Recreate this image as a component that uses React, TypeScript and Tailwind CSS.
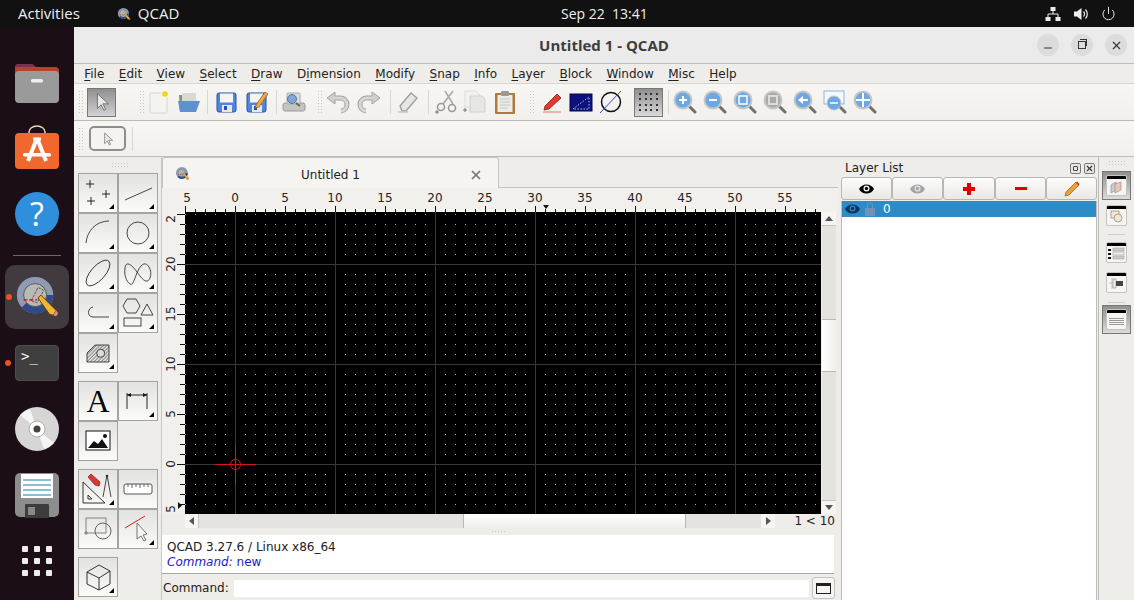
import React from 'react';
import { Power, Minus, X } from 'lucide-react';

const UI = { fontFamily: '"DejaVu Sans", sans-serif' };
const SHELL = { fontFamily: '"Open Sans", "Noto Sans", sans-serif' };

const Svg = ({ children, size = 24, box = 24 }: { children: React.ReactNode; size?: number; box?: number }) => (
  <svg width={size} height={size} viewBox={`0 0 ${box} ${box}`} className="block shrink-0">
    {children}
  </svg>
);

const QcadLogo = ({ size = 16 }: { size?: number }) => (
  <svg width={size} height={size} viewBox="0 0 48 48" className="block shrink-0">
    <circle cx="22" cy="22" r="19" fill="#8f9bb3" />
    <path d="M41 22a19 19 0 0 1-33 13l6-6a11 11 0 0 0 19-7z" fill="#2f4a86" />
    <circle cx="22" cy="22" r="12" fill="#b9b9b6" stroke="#555" strokeWidth="1" />
    <path d="M18 28l7-14 6 3-7 13z" fill="none" stroke="#555" strokeWidth="1" strokeDasharray="3 1" />
    <path d="M10 27h14" stroke="#d00" strokeWidth="1.5" strokeDasharray="4 2" />
    <path d="M25 25l3-3 16 16-3 5-4-1z" fill="#f2b632" stroke="#5b3a10" strokeWidth="1" />
    <path d="M41 43l3-5 2 3-2 3z" fill="#e58a8a" />
  </svg>
);

const DockIcons = () => (
  <div className="w-[74px] shrink-0 bg-[#1b0e17] flex flex-col items-center">
    <svg width="46" height="42" viewBox="0 0 46 42" className="block mt-[35px]">
      <path d="M1 6a4 4 0 0 1 4-4h13l4 3h19a4 4 0 0 1 4 4v10H1z" fill="#b5432f" />
      <path d="M1 6a4 4 0 0 1 4-4h13l4 3H1z" fill="#7c3050" />
      <rect x="1" y="9" width="44" height="32" rx="4" fill="#9a9a9a" />
      <rect x="17" y="17" width="12" height="3.5" rx="1.5" fill="#eee" />
    </svg>
    <svg width="46" height="44" viewBox="0 0 46 44" className="block mt-[21px]">
      <path d="M15 11V7a8 6 0 0 1 16 0v4" fill="none" stroke="#f0d9a8" strokeWidth="1.5" />
      <rect x="1" y="8" width="44" height="36" rx="4" fill="#f0682d" />
      <path d="M23 13l-9 23M23 13l9 23" stroke="#fff" strokeWidth="4" fill="none" />
      <path d="M19 14h8" stroke="#fff" strokeWidth="3" />
      <rect x="9" y="28" width="28" height="3.5" rx="1.5" fill="#fff" />
    </svg>
    <div className="mt-[23px] w-[44px] h-[44px] rounded-full bg-[#2f8fdc] flex items-center justify-center text-white text-[32px] leading-none" style={SHELL}>
      ?
    </div>
    <div className="mt-[19px] w-[48px] h-px bg-[#6f666c]" />
    <div className="relative mt-[9px] w-[64px] h-[64px] rounded-[10px] bg-[#413b3f] flex items-center justify-center">
      <span className="absolute left-[1px] top-[29px] w-[6px] h-[6px] rounded-full bg-[#e95420]" />
      <QcadLogo size={46} />
    </div>
    <div className="relative mt-[16px] w-[74px] flex justify-center">
      <span className="absolute left-[5px] top-[15px] w-[6px] h-[6px] rounded-full bg-[#e95420]" />
      <div className="w-[44px] h-[36px] rounded-[4px] bg-[#3f3f3f] border border-[#4c4c4c] text-white text-[14px] leading-none pl-[5px] pt-[3px]" style={{ fontFamily: '"DejaVu Sans Mono", monospace' }}>
        &gt;_
      </div>
    </div>
    <svg width="46" height="46" viewBox="0 0 46 46" className="block mt-[25px]">
      <circle cx="23" cy="23" r="22" fill="#d6d6d6" />
      <path d="M23 23L6 9a22 22 0 0 1 10-6zM23 23l17 14a22 22 0 0 1-10 6z" fill="#f5f5f5" />
      <circle cx="23" cy="23" r="8" fill="#fff" stroke="#b8a89a" />
      <circle cx="23" cy="23" r="3.5" fill="#444" />
    </svg>
    <svg width="46" height="46" viewBox="0 0 46 46" className="block mt-[20px]">
      <rect x="1" y="1" width="44" height="44" rx="5" fill="#8d8d8d" />
      <rect x="7" y="2" width="32" height="24" fill="#fff" />
      <path d="M9 8h28M9 13h28M9 18h28M9 23h28" stroke="#1b7fb0" strokeWidth="1.2" />
      <rect x="11" y="32" width="24" height="14" rx="1" fill="#3c3c3c" />
      <rect x="14" y="35" width="7" height="8" fill="#888" />
    </svg>
    <div className="mt-[28px] grid grid-cols-3 gap-x-[6px] gap-y-[6px]">
      {Array.from({ length: 9 }).map((_, i) => (
        <span key={i} className="w-[6px] h-[6px] rounded-[1px] bg-[#eeeeee]" />
      ))}
    </div>
  </div>
);

const Grip = ({ className = '' }: { className?: string }) => (
  <svg width="5" height="24" viewBox="0 0 5 24" className={`block shrink-0 ${className}`}>
    {[1, 4, 7, 10, 13, 16, 19, 22].map((y) => (
      <g key={y} fill="#c9c7c2">
        <rect x="0" y={y} width="1" height="1" />
        <rect x="3" y={y} width="1" height="1" />
      </g>
    ))}
  </svg>
);

const Sep = ({ className = '' }: { className?: string }) => <div className={`w-px h-[24px] bg-[#d8d6d1] shrink-0 ${className}`} />;

const Arrow = () => (
  <path d="M7 3v16l4-4 3 6 2-1-3-6h6z" fill="#e8e8e8" stroke="#6a6a6a" strokeWidth="1" />
);

const Disk = ({ pen = false }: { pen?: boolean }) => (
  <Svg>
    <rect x="2" y="3" width="19" height="19" rx="2" fill="#4e86e0" stroke="#2a4fa8" />
    <rect x="5" y="3.5" width="13" height="9" fill="#f4f4f4" />
    <rect x="7" y="15" width="10" height="7" fill="#e7e7e7" />
    <rect x="9" y="16" width="3" height="4" fill="#2a4fa8" />
    {pen && <path d="M11 15l9-13 3 2-9 13-4 1z" fill="#f0a93a" stroke="#8a5a1a" strokeWidth="0.7" />}
  </Svg>
);

const Zoom = ({ children, off = false }: { children?: React.ReactNode; off?: boolean }) => (
  <Svg>
    <path d="M15 15l7 7" stroke="#707070" strokeWidth="3" strokeLinecap="round" />
    <circle cx="10" cy="10" r="9.500" fill="#c6c6c4" />
    <circle cx="10" cy="10" r="7.500" fill={off ? '#a9a9a7' : '#6ea8e4'} />
    {children}
  </Svg>
);

const Turn = ({ flip = false }: { flip?: boolean }) => (
  <svg width="24" height="24" viewBox="0 0 24 24" className={`block shrink-0 ${flip ? '-scale-x-100' : ''}`}>
    <path d="M6 8h8a6.500 6.500 0 0 1 1 13" fill="none" stroke="#a2a2a0" strokeWidth="5" />
    <path d="M1 8l8-6v12z" fill="#cfcfcc" stroke="#a2a2a0" />
    <path d="M8 8h6a6.500 6.500 0 0 1 1 13" fill="none" stroke="#d6d6d3" strokeWidth="3" />
  </svg>
);

const TopToolbar = () => (
  <div className="h-[37px] shrink-0 flex items-center bg-gradient-to-b from-[#f8f6f3] to-[#f2f0ec] border-b border-[#bdbbb6] pl-[5px]">
    <Grip />
    <button className="ml-[3px] w-[29px] h-[29px] border border-[#777] bg-gradient-to-b from-[#8f8f8f] to-[#d2d2d2] flex items-center justify-center">
      <Svg size={22}><Arrow /></Svg>
    </button>
    <Grip className="ml-[24px]" />
    <div className="ml-[2px]">
      <Svg>
        <rect x="3" y="3" width="17" height="20" rx="1" fill="#f3f3f0" stroke="#d6d6d2" />
        <circle cx="18" cy="4" r="3.5" fill="#f4d21f" stroke="#fff" />
      </Svg>
    </div>
    <div className="ml-[6px]">
      <Svg>
        <path d="M2 5h7l2 2h8v14H3z" fill="#8a8a8a" />
        <path d="M5 3h14v8H5z" fill="#d8d8d8" />
        <path d="M1 11h22l-4 11H3z" fill="#5f90d0" />
      </Svg>
    </div>
    <Sep className="ml-[6px]" />
    <div className="ml-[7px]"><Disk /></div>
    <div className="ml-[6px]"><Disk pen /></div>
    <Sep className="ml-[7px]" />
    <div className="ml-[5px]">
      <Svg>
        <rect x="1" y="13" width="22" height="8" rx="2" fill="#c4c4c2" stroke="#999" />
        <rect x="5" y="3" width="13" height="11" rx="1" fill="#dcdcda" stroke="#aaa" />
        <circle cx="10" cy="9" r="4.5" fill="#7fa7d8" stroke="#5577aa" />
        <path d="M14 13l4 3" stroke="#666" strokeWidth="2" />
      </Svg>
    </div>
    <Grip className="ml-[12px]" />
    <div className="ml-[3px]"><Turn /></div>
    <div className="ml-[7px]"><Turn flip /></div>
    <Sep className="ml-[9px]" />
    <div className="ml-[5px]">
      <Svg>
        <path d="M4 16L15 3l6 5-11 13H6z" fill="#e6e6e3" stroke="#9d9d9a" strokeWidth="1.3" />
        <path d="M2 22h10" stroke="#c8c8c5" strokeWidth="1.5" />
      </Svg>
    </div>
    <Sep className="ml-[8px]" />
    <div className="ml-[5px]">
      <Svg>
        <path d="M19 1L9 14M11 1l8 13" stroke="#aaa" strokeWidth="1.6" fill="none" />
        <circle cx="7" cy="17" r="3.5" fill="none" stroke="#999" strokeWidth="1.6" />
        <circle cx="18" cy="18" r="3.5" fill="none" stroke="#999" strokeWidth="1.6" />
        <path d="M1 22h4M3 20v4" stroke="#777" />
      </Svg>
    </div>
    <div className="ml-[4px]">
      <Svg>
        <path d="M3 1h11l3 3v13H3z" fill="#f2f2f0" stroke="#dcdcd9" />
        <path d="M8 6h12l3 3v13H8z" fill="#e6e6e3" stroke="#d0d0cd" />
        <path d="M1 20h4M3 18v4" stroke="#777" />
      </Svg>
    </div>
    <div className="ml-[7px]">
      <Svg>
        <rect x="2" y="3" width="20" height="21" rx="1" fill="#b07a3c" />
        <rect x="4.5" y="5" width="15" height="17" fill="#ecebe8" />
        <path d="M7 9h10M7 12h10M7 15h10M7 18h7" stroke="#c5c5c2" />
        <rect x="8" y="1" width="8" height="5" rx="1" fill="#999" />
      </Svg>
    </div>
    <Grip className="ml-[13px]" />
    <div className="ml-[6px]">
      <Svg>
        <path d="M4 16L16 4l4 4L8 19l-5 1z" fill="#e03a30" stroke="#8a1a16" strokeWidth="0.8" />
        <path d="M2 22h18" stroke="#e98a80" strokeWidth="1.2" />
      </Svg>
    </div>
    <div className="ml-[4px]">
      <Svg>
        <rect x="1" y="4" width="22" height="17" fill="#0b1280" stroke="#05093f" />
        <path d="M4 19L20 7v12z" fill="none" stroke="#dfe3ff" strokeWidth="0.8" strokeDasharray="1.5 1.5" />
      </Svg>
    </div>
    <div className="ml-[6px]">
      <Svg>
        <circle cx="12" cy="12" r="9.5" fill="none" stroke="#111" strokeWidth="1.5" />
        <path d="M1 23L22 1" stroke="#3344dd" strokeWidth="1" />
      </Svg>
    </div>
    <button className="ml-[11px] w-[29px] h-[29px] border border-[#777] bg-gradient-to-b from-[#8f8f8f] to-[#dadada] grid grid-cols-4 gap-[3px] p-[4px] place-items-center">
      {Array.from({ length: 16 }).map((_, i) => (
        <span key={i} className="w-[2px] h-[2px] bg-[#333]" />
      ))}
    </button>
    <Sep className="ml-[5px]" />
    <div className="ml-[4px]"><Zoom><path d="M6 10h8M10 6v8" stroke="#fff" strokeWidth="2" /></Zoom></div>
    <div className="ml-[6px]"><Zoom><path d="M6 10h8" stroke="#fff" strokeWidth="2" /></Zoom></div>
    <div className="ml-[6px]"><Zoom><rect x="6" y="6" width="8" height="8" fill="none" stroke="#fff" strokeWidth="1.5" /></Zoom></div>
    <div className="ml-[6px]"><Zoom off><rect x="6" y="6" width="8" height="8" fill="none" stroke="#ddd" strokeWidth="2" /></Zoom></div>
    <div className="ml-[6px]"><Zoom><path d="M5 10l5-4v3h5v2h-5v3z" fill="#fff" /></Zoom></div>
    <div className="ml-[6px]">
      <Svg>
        <rect x="1" y="1" width="20" height="13" fill="#f4f8fd" stroke="#8fb4de" />
        <path d="M16 16l6 6" stroke="#707070" strokeWidth="3" strokeLinecap="round" />
        <circle cx="11" cy="13" r="7" fill="#6ea8e4" stroke="#c6c6c4" />
        <path d="M7 13h8" stroke="#d8e8f8" strokeWidth="2" />
      </Svg>
    </div>
    <div className="ml-[6px]">
      <Zoom><path d="M10 3v14M3 10h14" stroke="#fff" strokeWidth="2" /></Zoom>
    </div>
  </div>
);

const Tool = ({ children, corner = true }: { children?: React.ReactNode; corner?: boolean }) => (
  <div className="relative w-[40px] h-[40px] bg-gradient-to-b from-[#e2e2e1] to-[#fbfbfa] flex items-center justify-center border border-[#a3a3a1]">
    {children}
    {corner && (
      <span className="absolute right-[3px] bottom-[3px] w-0 h-0 border-l-[5px] border-l-transparent border-b-[5px] border-b-black" />
    )}
  </div>
);

const ToolColumn = () => (
  <div className="w-[88px] shrink-0 bg-[#efedea] border-r border-[#c9c7c3] pl-[4px] overflow-hidden">
    <div className="h-[16px] flex items-center justify-center">
      <svg width="16" height="4"><g fill="#c9c7c2">{[0, 3, 6, 9, 12, 15].map((x) => <React.Fragment key={x}><rect x={x} y="0" width="1" height="1" /><rect x={x} y="3" width="1" height="1" /></React.Fragment>)}</g></svg>
    </div>
    <div className="grid grid-cols-[40px_40px]">
      <Tool>
        <Svg size={32} box={32}><path d="M8 3v8M4 7h8M24 13v8M20 17h8M9 20v8M5 24h8" stroke="#111" strokeWidth="0.9" /></Svg>
      </Tool>
      <Tool><Svg size={32} box={32}><path d="M3 23L30 11" stroke="#333" strokeWidth="0.9" /></Svg></Tool>
      <Tool><Svg size={32} box={32}><path d="M4 26C5 14 14 4 27 4" fill="none" stroke="#333" strokeWidth="0.9" /></Svg></Tool>
      <Tool><Svg size={32} box={32}><circle cx="16" cy="16" r="11" fill="none" stroke="#333" strokeWidth="0.9" /></Svg></Tool>
      <Tool><Svg size={32} box={32}><ellipse cx="16" cy="16" rx="7" ry="16" transform="rotate(42 16 16)" fill="none" stroke="#333" strokeWidth="0.9" /></Svg></Tool>
      <Tool><Svg size={32} box={32}><path d="M3 11C4 3 10 8 15 15S25 28 28 21 25 2 19 9 12 30 8 27 2 18 3 11z" fill="none" stroke="#333" strokeWidth="0.9" /></Svg></Tool>
      <Tool><Svg size={32} box={32}><path d="M27 20H11C5 20 5 11 11 10" fill="none" stroke="#333" strokeWidth="0.9" /></Svg></Tool>
      <Tool>
        <Svg size={36} box={36}>
          <path d="M3 11l4-7h9l4 7-4 7H7z" fill="none" stroke="#333" strokeWidth="0.9" />
          <path d="M27 9l6 11H21z" fill="none" stroke="#333" strokeWidth="0.9" />
          <rect x="4" y="23" width="17" height="8" fill="none" stroke="#333" strokeWidth="0.9" />
        </Svg>
      </Tool>
      <Tool>
        <Svg size={32} box={32}>
          <defs>
            <pattern id="hatch" width="2.500" height="2.500" patternUnits="userSpaceOnUse" patternTransform="rotate(-45)">
              <path d="M0 1h3" stroke="#555" strokeWidth="0.8" />
            </pattern>
          </defs>
          <path d="M5 25V16L13 8H27V25z" fill="url(#hatch)" stroke="#333" strokeWidth="0.9" />
          <circle cx="18.700" cy="16.300" r="4" fill="#ddd" stroke="#333" strokeWidth="0.9" />
        </Svg>
      </Tool>
    </div>
    <div className="grid grid-cols-[40px_40px] mt-[8px]">
      <Tool corner={false}>
        <span className="text-[32px] leading-none text-black" style={{ fontFamily: '"Liberation Serif", serif' }}>A</span>
      </Tool>
      <Tool>
        <Svg size={32} box={32}>
          <path d="M5 8v16M25 8v16M5 10h20" stroke="#111" fill="none" strokeWidth="0.9" />
          <path d="M5 10l4-2v4zM25 10l-4-2v4z" fill="#111" />
        </Svg>
      </Tool>
      <Tool corner={false}>
        <Svg size={28} box={28}>
          <rect x="2" y="4" width="24" height="19" fill="#fff" stroke="#111" />
          <path d="M4 21l6-7 4 3 4-5 6 9z" fill="#111" />
          <circle cx="21" cy="9" r="2" fill="#111" />
        </Svg>
      </Tool>
    </div>
    <div className="grid grid-cols-[40px_40px] mt-[8px]">
      <Tool>
        <Svg size={36} box={36}>
          <path d="M3 11v21h22zM8 24v4h4z" fill="none" stroke="#333" strokeWidth="1" />
          <path d="M8 6l3-3 9 8-1 4-4-1z" fill="#d9392f" stroke="#7a1a16" strokeWidth="0.7" />
          <path d="M27 4l-4 22M27 4l4 22" stroke="#333" fill="none" strokeWidth="0.9" />
          <circle cx="27" cy="5" r="1.300" fill="#333" />
        </Svg>
      </Tool>
      <Tool corner={false}>
        <Svg size={30} box={30}>
          <rect x="1" y="10" width="28" height="10" rx="2" fill="#fff" stroke="#444" strokeWidth="0.9" />
          <path d="M5 10v3M9 10v4M13 10v3M17 10v4M21 10v3M25 10v3" stroke="#444" strokeWidth="0.8" />
        </Svg>
      </Tool>
      <Tool corner={false}>
        <Svg size={32} box={32}>
          <rect x="4" y="5" width="20" height="15" fill="none" stroke="#777" strokeWidth="0.9" />
          <circle cx="21" cy="18" r="8" fill="none" stroke="#555" strokeWidth="0.9" />
          <path d="M2 20h4M4 18v4" stroke="#777" strokeWidth="0.9" />
        </Svg>
      </Tool>
      <Tool>
        <Svg size={32} box={32}>
          <path d="M3 15L23 3" stroke="#e01a1a" strokeWidth="1" />
          <path d="M15 10v16l4-3 3 5 2-1-3-5 4-1z" fill="#f4f4f4" stroke="#666" strokeWidth="0.9" />
        </Svg>
      </Tool>
    </div>
    <div className="grid grid-cols-[40px_40px] mt-[8px]">
      <Tool>
        <Svg size={32} box={32}>
          <path d="M5 11L17 4l11 6v13l-11 6-12-6zM5 11l12 6 11-7M17 17v12" fill="none" stroke="#333" strokeWidth="1" />
        </Svg>
      </Tool>
    </div>
  </div>
);

const TOP_LABELS = [5, 0, 5, 10, 15, 20, 25, 30, 35, 40, 45, 50, 55];
const SIDE_LABELS = [0, 5, 10, 15, 20];

// rulers are drawn from the page x/y of the drawing area
const RulerTop = () => (
  <svg width="673" height="24" viewBox="162 188 673 24" className="block">
    {Array.from({ length: 64 }).map((_, i) => {
      const x = 185.5 + i * 10;
      const major = i % 5 === 0;
      return <path key={i} d={`M${x} ${major ? 206 : 209}V212`} stroke="#111" />;
    })}
    {TOP_LABELS.map((n, i) => (
      <text key={i} x={i === 0 ? 187 : 185 + i * 50} y="202" textAnchor="middle" fontSize="12" fill="#222" style={UI}>{n}</text>
    ))}
    <path d="M543 205h6l-3 4z" fill="#111" />
  </svg>
);

const RulerLeft = () => (
  <svg width="23" height="302" viewBox="162 212 23 302" className="block">
    {Array.from({ length: 31 }).map((_, i) => {
      const y = 214.5 + i * 10;
      const major = i % 5 === 0;
      return <path key={i} d={`M${major ? 177 : 180} ${y}H185`} stroke="#111" />;
    })}
    {SIDE_LABELS.map((n, i) => {
      const y = 464 - i * 50;
      return (
        <text key={i} x="173" y="0" textAnchor="middle" fontSize="12" fill="#222" style={UI} transform={`translate(2 ${y}) rotate(-90 173 0)`}>{n}</text>
      );
    })}
    <text x="173" y="0" textAnchor="middle" fontSize="12" fill="#222" style={UI} transform="translate(2 219) rotate(-90 173 0)">2</text>
    <text x="173" y="0" textAnchor="middle" fontSize="12" fill="#222" style={UI} transform="translate(2 509) rotate(-90 173 0)">5</text>
    <path d="M178 502v7l4-3.500z" fill="#111" />
  </svg>
);

const Drawing = () => (
  <svg width="636" height="302" viewBox="185 212 636 302" className="block">
    <defs>
      <pattern id="dots" x="185" y="214" width="10" height="10" patternUnits="userSpaceOnUse">
        <rect x="0" y="0" width="1" height="1" fill="#a8a8a8" />
      </pattern>
    </defs>
    <rect x="185" y="212" width="636" height="302" fill="#000" />
    <rect x="185" y="212" width="636" height="302" fill="url(#dots)" />
    {[235.5, 335.5, 435.5, 535.5, 635.5, 735.5].map((x) => (
      <path key={x} d={`M${x} 212V514`} stroke="#383838" />
    ))}
    {[264.5, 364.5, 464.5].map((y) => (
      <path key={y} d={`M185 ${y}H821`} stroke="#383838" />
    ))}
    <path d="M215 464.500H256M235.500 444V485" stroke="#d01818" />
    <circle cx="235.500" cy="464.500" r="5" fill="none" stroke="#d01818" />
  </svg>
);

const ScrollV = () => (
  <div className="w-[14px] h-[302px] flex flex-col bg-[#e4e3e0]">
    <div className="h-[14px] bg-[#f6f5f3] border-b border-[#c4c3bf] flex items-center justify-center">
      <span className="w-0 h-0 border-x-[4px] border-x-transparent border-b-[5px] border-b-[#555]" />
    </div>
    <div className="h-[93px]" />
    <div className="h-[53px] bg-gradient-to-r from-white to-[#f0efec] border-y border-[#b9b8b4]" />
    <div className="flex-1" />
    <div className="h-[14px] bg-[#f6f5f3] border-t border-[#c4c3bf] flex items-center justify-center">
      <span className="w-0 h-0 border-x-[4px] border-x-transparent border-t-[5px] border-t-[#555]" />
    </div>
  </div>
);

const ScrollH = () => (
  <div className="h-[14px] w-[590px] flex bg-[#e4e3e0]">
    <div className="w-[14px] bg-[#f6f5f3] border-r border-[#c4c3bf] flex items-center justify-center">
      <span className="w-0 h-0 border-y-[4px] border-y-transparent border-r-[5px] border-r-[#555]" />
    </div>
    <div className="w-[264px]" />
    <div className="w-[223px] bg-gradient-to-b from-white to-[#f0efec] border-x border-[#b9b8b4]" />
    <div className="flex-1" />
    <div className="w-[14px] bg-[#f6f5f3] flex items-center justify-center">
      <span className="w-0 h-0 border-y-[4px] border-y-transparent border-l-[5px] border-l-[#555]" />
    </div>
  </div>
);

const Center = () => (
  <div className="w-[676px] shrink-0 flex flex-col bg-[#efedea]">
    <div className="h-[31px] flex items-end">
      <div className="w-[337px] h-[31px] bg-[#f6f4f1] border border-b-0 border-[#c4c3bf] rounded-t-[3px] flex items-center relative text-[12px] text-[#222]" style={UI}>
        <span className="ml-[12px]"><QcadLogo size={15} /></span>
        <span className="ml-[111px] mt-[3px]">Untitled 1</span>
        <X className="absolute right-[15px] top-[10px] text-[#777]" size={14} strokeWidth={3} />
      </div>
      <div className="flex-1 h-px bg-[#c4c3bf]" />
    </div>
    <div className="bg-[#f2f0ed] h-[24px]">
      <RulerTop />
    </div>
    <div className="flex">
      <div className="bg-[#f2f0ed]"><RulerLeft /></div>
      <Drawing />
      <div className="ml-px"><ScrollV /></div>
    </div>
    <div className="flex items-center h-[14px]">
      <div className="w-[23px]" />
      <ScrollH />
      <div className="flex-1 text-right text-[12px] text-[#222] pr-[3px] leading-none" style={UI}>1 &lt; 10</div>
    </div>
    <div className="h-[7px] flex items-center justify-center">
      <svg width="16" height="4"><g fill="#c9c7c2">{[0, 3, 6, 9, 12].map((x) => <rect key={x} x={x} y="1" width="1" height="1" />)}</g></svg>
    </div>
    <div className="h-[39px] w-[672px] bg-white border-b border-[#a9a8a4] px-[5px] pt-[5px] text-[12px] leading-[15px] text-[#222]" style={UI}>
      <div>QCAD 3.27.6 / Linux x86_64</div>
      <div className="text-[#1c1ccc]"><i>Command:</i> new</div>
    </div>
    <div className="flex-1 flex items-center text-[12px] text-[#222] w-[673px] pt-[2px]" style={UI}>
      <span className="ml-px">Command:</span>
      <div className="ml-[5px] w-[575px] h-[17px] bg-white" />
      <div className="ml-[3px] w-[23px] h-[22px] border border-[#c4c3bf] rounded-[3px] bg-[#f6f5f3] flex items-center justify-center">
        <span className="block w-[15px] h-[11px] border border-[#222] border-t-[3px]" />
      </div>
    </div>
  </div>
);

const LayerButton = ({ children, w }: { children: React.ReactNode; w: string }) => (
  <div className={`${w} h-[23px] bg-gradient-to-b from-[#fcfcfb] to-[#e9e8e5] border border-[#b8b7b3] rounded-[3px] flex items-center justify-center`}>
    {children}
  </div>
);

const Eye = ({ color, pupil = '#fff' }: { color: string; pupil?: string }) => (
  <svg width="15" height="12" viewBox="0 0 15 12" className="block shrink-0">
    <path d="M0 6C3 0 12 0 15 6 12 12 3 12 0 6z" fill={color} />
    <circle cx="7.500" cy="5.500" r="3" fill={pupil} />
    <circle cx="7.500" cy="5.500" r="1.700" fill={color} />
  </svg>
);

const LayerPanel = () => (
  <div className="w-[260px] shrink-0 bg-[#efedea] flex flex-col pl-[3px] pr-px">
    <div className="h-[20px] flex items-center justify-between text-[12px] text-[#222] pl-[4px] pr-[2px] pt-[2px]" style={UI}>
      <span>Layer List</span>
      <div className="flex gap-[3px]">
        <span className="w-[11px] h-[11px] border border-[#777] rounded-[2px] bg-[#e8e7e4] flex items-center justify-center">
          <span className="w-[5px] h-[5px] border border-[#444] rounded-[1px]" />
        </span>
        <span className="w-[11px] h-[11px] border border-[#777] rounded-[2px] bg-[#e8e7e4] flex items-center justify-center">
          <X size={9} strokeWidth={3} className="text-[#333]" />
        </span>
      </div>
    </div>
    <div className="flex">
      <LayerButton w="w-[51px]"><Eye color="#000" /></LayerButton>
      <LayerButton w="w-[51px]"><Eye color="#a5a5a5" pupil="#e6e6e6" /></LayerButton>
      <LayerButton w="w-[52px]">
        <span className="relative w-[12px] h-[12px]">
          <span className="absolute left-0 top-[4px] w-[12px] h-[4px] bg-[#e00000]" />
          <span className="absolute left-[4px] top-0 w-[4px] h-[12px] bg-[#e00000]" />
        </span>
      </LayerButton>
      <LayerButton w="w-[51px]"><span className="w-[12px] h-[3px] bg-[#e00000]" /></LayerButton>
      <LayerButton w="w-[51px]">
        <Svg size={16} box={16}>
          <path d="M1 15l1-4L12 1l3 3L5 14z" fill="#e8a33a" stroke="#8a5a1a" strokeWidth="0.7" />
          <path d="M11.500 1.500l3 3 1-1.500-2.500-2.500z" fill="#d9392f" />
        </Svg>
      </LayerButton>
    </div>
    <div className="flex-1 bg-white mt-px border-x border-[#bdbcb8] text-white">
      <div className="h-[16px] bg-[#2e8bc6] flex items-center text-[12px]" style={UI}>
        <span className="ml-[3px]"><Eye color="#12315c" pupil="#2e8bc6" /></span>
        <span className="ml-[5px] relative w-[10px] h-[14px]">
          <span className="absolute left-[2px] top-0 w-[6px] h-[7px] border border-[#6f93b8] rounded-t-[3px]" />
          <span className="absolute left-0 bottom-0 w-[10px] h-[8px] bg-[#6f93b8]" />
        </span>
        <span className="ml-[8px]">0</span>
      </div>
    </div>
  </div>
);

const MiniWindow = ({ children, active = false }: { children?: React.ReactNode; active?: boolean }) => (
  <div className={active ? 'w-[29px] h-[29px] border border-[#777] bg-gradient-to-b from-[#8f8f8f] to-[#dcdcdc] flex items-center justify-center' : 'w-[29px] h-[22px] flex items-center justify-center'}>
    <div className="w-[21px] h-[21px] bg-[#f6f5f3] border border-[#c4c3bf] rounded-[2px] overflow-hidden">
      <div className="h-[3px] bg-black" />
      <div className="flex items-center justify-center h-[16px]">{children}</div>
    </div>
  </div>
);

const DockRight = () => (
  <div className="flex-1 bg-[#efedea] border-l border-[#bdbcb8] flex flex-col items-center pt-[4px]">
    <svg width="16" height="4" className="shrink-0"><g fill="#c9c7c2">{[0, 3, 6, 9, 12, 15].map((x) => <React.Fragment key={x}><rect x={x} y="0" width="1" height="1" /><rect x={x} y="3" width="1" height="1" /></React.Fragment>)}</g></svg>
    <div className="mt-[6px]">
      <MiniWindow active>
        <svg width="13" height="13" viewBox="0 0 13 13">
          <path d="M1 4l5-3v8l-5 3z" fill="#ccc" stroke="#888" strokeWidth="0.6" />
          <path d="M5 3l6-2v8l-6 3z" fill="#eec4b6" stroke="#888" strokeWidth="0.6" />
        </svg>
      </MiniWindow>
    </div>
    <div className="mt-[4px]">
      <MiniWindow>
        <svg width="13" height="13" viewBox="0 0 13 13">
          <rect x="1" y="1" width="8" height="7" fill="#f4e6c8" stroke="#888" strokeWidth="0.7" />
          <circle cx="8" cy="8" r="4" fill="#f4e6c8" stroke="#888" strokeWidth="0.7" />
        </svg>
      </MiniWindow>
    </div>
    <div className="w-[17px] h-px bg-[#d0cecb] mt-[8px]" />
    <div className="mt-[6px]">
      <MiniWindow>
        <svg width="17" height="13" viewBox="0 0 17 13">
          <path d="M0 2h3v2H0zM0 6h3v2H0zM0 10h3v2H0z" fill="#111" />
          <rect x="5" y="1" width="11" height="3" fill="#ccc" stroke="#999" strokeWidth="0.5" />
          <rect x="5" y="5" width="11" height="3" fill="#eee" stroke="#999" strokeWidth="0.5" />
          <rect x="5" y="9" width="11" height="3" fill="#ccc" stroke="#999" strokeWidth="0.5" />
        </svg>
      </MiniWindow>
    </div>
    <div className="mt-[8px]">
      <MiniWindow>
        <svg width="15" height="13" viewBox="0 0 15 13">
          <path d="M3 1v11M3 6H0" stroke="#c9a08a" strokeWidth="0.7" />
          <path d="M4 2h3v9H4z" fill="#eee" stroke="#888" strokeWidth="0.6" />
          <rect x="7" y="4" width="7" height="5" fill="#444" />
        </svg>
      </MiniWindow>
    </div>
    <div className="w-[17px] h-px bg-[#d0cecb] mt-[9px]" />
    <div className="mt-[2px]">
      <MiniWindow active>
        <span className="flex flex-col gap-px">
          <span className="w-[15px] h-px bg-[#999]" />
          <span className="w-[15px] h-px bg-[#999]" />
          <span className="w-[15px] h-px bg-[#999]" />
          <span className="w-[15px] h-px bg-[#999]" />
        </span>
      </MiniWindow>
    </div>
  </div>
);

const MENU: [string, string, string][] = [
  ['', 'F', 'ile'], ['', 'E', 'dit'], ['', 'V', 'iew'], ['', 'S', 'elect'], ['', 'D', 'raw'],
  ['D', 'i', 'mension'], ['', 'M', 'odify'], ['', 'S', 'nap'], ['', 'I', 'nfo'], ['', 'L', 'ayer'],
  ['', 'B', 'lock'], ['', 'W', 'indow'], ['', 'M', 'isc'], ['', 'H', 'elp'],
];

const App = () => {
  return (
    <div className="w-[1134px] h-[600px] overflow-hidden flex flex-col bg-[#1b0e17]">
      <div className="h-[27px] shrink-0 bg-[#111111] text-[#eeeeee] text-[15px] flex items-center relative" style={SHELL}>
        <span className="ml-[18px]">Activities</span>
        <span className="ml-[37px]"><QcadLogo size={14} /></span>
        <span className="ml-[7px]">QCAD</span>
        <span className="absolute left-[561px] top-[3px] text-[14px]">Sep 22&nbsp;&nbsp;13:41</span>
        <div className="ml-auto flex items-center gap-[12px] pr-[18px]">
          <svg width="16" height="16" viewBox="0 0 16 16" className="block">
            <rect x="5.500" y="1" width="5" height="4" fill="#eee" />
            <rect x="0.500" y="11" width="5" height="4" fill="#eee" />
            <rect x="10.500" y="11" width="5" height="4" fill="#eee" />
            <path d="M8 5v3M3 11V8h10v3" fill="none" stroke="#eee" />
          </svg>
          <svg width="16" height="16" viewBox="0 0 16 16" className="block">
            <path d="M1 5.500h3L8.500 2v12L4 10.500H1z" fill="#eee" />
            <path d="M10.500 5.500a3.500 3.500 0 0 1 0 5M12.500 3.500a6.500 6.500 0 0 1 0 9" fill="none" stroke="#eee" strokeWidth="1.200" />
          </svg>
          <Power size={15} strokeWidth={1.5} />
        </div>
      </div>
      <div className="flex-1 flex min-h-0">
        <DockIcons />
        <div className="flex-1 flex flex-col min-w-0 bg-[#efedea]">
          <div className="h-[37px] shrink-0 bg-[#ebebeb] border-b border-[#bdbcb8] flex items-center relative">
            <span className="flex-1 text-center text-[15px] font-bold text-[#3d3d3d]" style={SHELL}>Untitled 1 - QCAD</span>
            <div className="absolute right-[7px] top-[7px] flex gap-[12px]">
              <span className="w-[22px] h-[22px] rounded-full bg-[#dcdcdc] flex items-center justify-center text-[#333]"><Minus size={12} className="translate-y-[3px]" /></span>
              <span className="w-[22px] h-[22px] rounded-full bg-[#dcdcdc] flex items-center justify-center">
                <span className="relative w-[8px] h-[8px] border border-[#333]">
                  <span className="absolute left-[1px] top-[-3px] w-[7px] h-[7px] border-t border-r border-[#333]" />
                </span>
              </span>
              <span className="w-[22px] h-[22px] rounded-full bg-[#dcdcdc] flex items-center justify-center text-[#333]"><X size={13} /></span>
            </div>
          </div>
          <div className="h-[20px] shrink-0 bg-[#efedea] border-b border-[#d8d6d2] flex items-center pl-[3px] text-[12px] text-[#222]" style={UI}>
            {MENU.map(([a, u, b]) => (
              <span key={a + u + b} className="px-[7.25px]">
                {a}<span className="underline underline-offset-2">{u}</span>{b}
              </span>
            ))}
          </div>
          <TopToolbar />
          <div className="h-[36px] shrink-0 flex items-center bg-gradient-to-b from-[#f8f6f3] to-[#f2f0ec] border-b border-[#bdbcb8] pl-[5px]">
            <Grip />
            <div className="ml-[5px] w-[37px] h-[25px] rounded-[5px] border-2 border-[#8e8e8c] bg-[#f4f3f1] flex items-center justify-center">
              <Svg size={16}><Arrow /></Svg>
            </div>
            <Sep className="ml-[6px]" />
          </div>
          <div className="flex-1 flex min-h-0">
            <ToolColumn />
            <Center />
            <LayerPanel />
            <DockRight />
          </div>
        </div>
      </div>
    </div>
  );
};

export default App;
